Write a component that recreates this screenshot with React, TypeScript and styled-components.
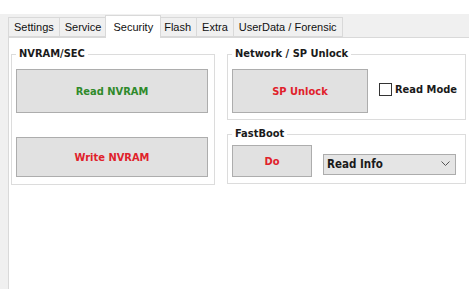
import React, { useState } from 'react';
import styled, { createGlobalStyle } from 'styled-components';

const GlobalStyle = createGlobalStyle`
  html, body {
    margin: 0;
    padding: 0;
    background: #ffffff;
  }
  body {
    font-family: 'Liberation Sans', Arial, sans-serif;
  }
`;

const Window = styled.div`
  width: 469px;
  height: 289px;
  padding-top: 14px;
  box-sizing: border-box;
  display: flex;
  flex-direction: column;
  background: #ffffff;
  overflow: hidden;
`;

const TabControl = styled.div`
  flex: 1;
  display: flex;
  flex-direction: column;
  background: #f0f0f0;
`;

const TabStrip = styled.div`
  height: 23px;
  display: flex;
  align-items: flex-end;
  padding-left: 8px;
`;

const Tab = styled.div<{ $active?: boolean }>`
  box-sizing: border-box;
  height: ${(p) => (p.$active ? '23px' : '20px')};
  padding: ${(p) => (p.$active ? '0 7px' : '0 5px')};
  margin: ${(p) => (p.$active ? '0 -2px -1px -2px' : '0 0 0 -1px')};
  display: flex;
  align-items: center;
  border: 1px solid #d9d9d9;
  border-bottom: ${(p) => (p.$active ? 'none' : '1px solid #d9d9d9')};
  background: ${(p) => (p.$active ? '#ffffff' : '#f0f0f0')};
  position: relative;
  z-index: ${(p) => (p.$active ? 2 : 1)};
  font-size: 11px;
  color: #111;
  white-space: nowrap;
  cursor: default;
  &:first-child {
    margin-left: 0;
  }
`;

const Panel = styled.div`
  flex: 1;
  margin-left: 8px;
  background: #ffffff;
  border-left: 1px solid #d9d9d9;
  border-top: 1px solid #d9d9d9;
  display: flex;
  align-items: flex-start;
  gap: 12px;
  padding: 9px 0 0 2px;
`;

const Column = styled.div`
  display: flex;
  flex-direction: column;
  gap: 7px;
`;

const Group = styled.fieldset<{ $width: number }>`
  width: ${(p) => p.$width}px;
  box-sizing: border-box;
  margin: 0;
  padding: ${(p) => (p.$width > 210 ? '0 4px 6px 4px' : '0 6px 7px 4px')};
  border: 1px solid #dcdcdc;
  min-width: 0;
`;

const Legend = styled.legend`
  font-family: 'DejaVu Sans Condensed', 'DejaVu Sans', sans-serif;
  font-stretch: condensed;
  font-weight: bold;
  font-size: 11px;
  line-height: 14px;
  color: #1a1a1a;
  padding: 0 3px;
  margin-left: 0;
`;

const Stack = styled.div`
  display: flex;
  flex-direction: column;
  gap: 24px;
  padding-top: 8px;
`;

const Row = styled.div<{ $top: number; $gap: number }>`
  display: flex;
  align-items: center;
  gap: ${(p) => p.$gap}px;
  padding-top: ${(p) => p.$top}px;
`;

const Button = styled.button<{ $w: number; $h: number; $color: string }>`
  width: ${(p) => p.$w}px;
  height: ${(p) => p.$h}px;
  box-sizing: border-box;
  background: #e1e1e1;
  border: 1px solid #adadad;
  border-radius: 0;
  padding: 0;
  font-family: 'DejaVu Sans Condensed', 'DejaVu Sans', sans-serif;
  font-stretch: condensed;
  font-weight: bold;
  font-size: 11px;
  color: ${(p) => p.$color};
  outline: none;
  cursor: default;
`;

const CheckLabel = styled.label`
  display: flex;
  align-items: center;
  gap: 3px;
  font-family: 'DejaVu Sans Condensed', 'DejaVu Sans', sans-serif;
  font-stretch: condensed;
  font-weight: bold;
  font-size: 11px;
  color: #1a1a1a;
  margin-top: -4px;
`;

const Box = styled.span`
  width: 13px;
  height: 13px;
  box-sizing: border-box;
  border: 1px solid #333;
  background: #fff;
  display: inline-block;
`;

const Combo = styled.div`
  width: 133px;
  height: 21px;
  box-sizing: border-box;
  background: #e5e5e5;
  border: 1px solid #acacac;
  display: flex;
  align-items: center;
  justify-content: space-between;
  padding: 0 5px 0 3px;
  font-family: 'DejaVu Sans Condensed', 'DejaVu Sans', sans-serif;
  font-stretch: condensed;
  font-weight: bold;
  font-size: 11.5px;
  color: #1a1a1a;
  margin-top: 6px;
`;

const tabs = ['Settings', 'Service', 'Security', 'Flash', 'Extra', 'UserData / Forensic'];

const GREEN = '#2f8a2b';
const RED = '#e0212b';

function App(): JSX.Element {
  const [active, setActive] = useState<string>('Security');
  const [readMode, setReadMode] = useState<boolean>(false);

  return (
    <Window>
      <GlobalStyle />
      <TabControl>
        <TabStrip>
          {tabs.map((t) => (
            <Tab key={t} $active={t === active} onClick={() => setActive(t)}>
              {t}
            </Tab>
          ))}
        </TabStrip>
        <Panel>
          <Group $width={204}>
            <Legend>NVRAM/SEC</Legend>
            <Stack>
              <Button $w={192} $h={44} $color={GREEN}>Read NVRAM</Button>
              <Button $w={192} $h={40} $color={RED}>Write NVRAM</Button>
            </Stack>
          </Group>
          <Column>
            <Group $width={239}>
              <Legend>Network / SP Unlock</Legend>
              <Row $top={8} $gap={11}>
                <Button $w={136} $h={44} $color={RED}>SP Unlock</Button>
                <CheckLabel onClick={() => setReadMode(!readMode)}>
                  <Box>
                    {readMode && (
                      <svg width="11" height="11" viewBox="0 0 11 11">
                        <path d="M2 5.5 L4.5 8 L9 2.5" stroke="#222" strokeWidth="1.5" fill="none" />
                      </svg>
                    )}
                  </Box>
                  Read Mode
                </CheckLabel>
              </Row>
            </Group>
            <Group $width={239}>
              <Legend>FastBoot</Legend>
              <Row $top={4} $gap={11}>
                <Button $w={80} $h={32} $color={RED}>Do</Button>
                <Combo>
                  <span>Read Info</span>
                  <svg width="9" height="6" viewBox="0 0 9 6">
                    <path d="M0.5 0.5 L4.5 4.5 L8.5 0.5" stroke="#555" strokeWidth="1" fill="none" />
                  </svg>
                </Combo>
              </Row>
            </Group>
          </Column>
        </Panel>
      </TabControl>
    </Window>
  );
}

export default App;
